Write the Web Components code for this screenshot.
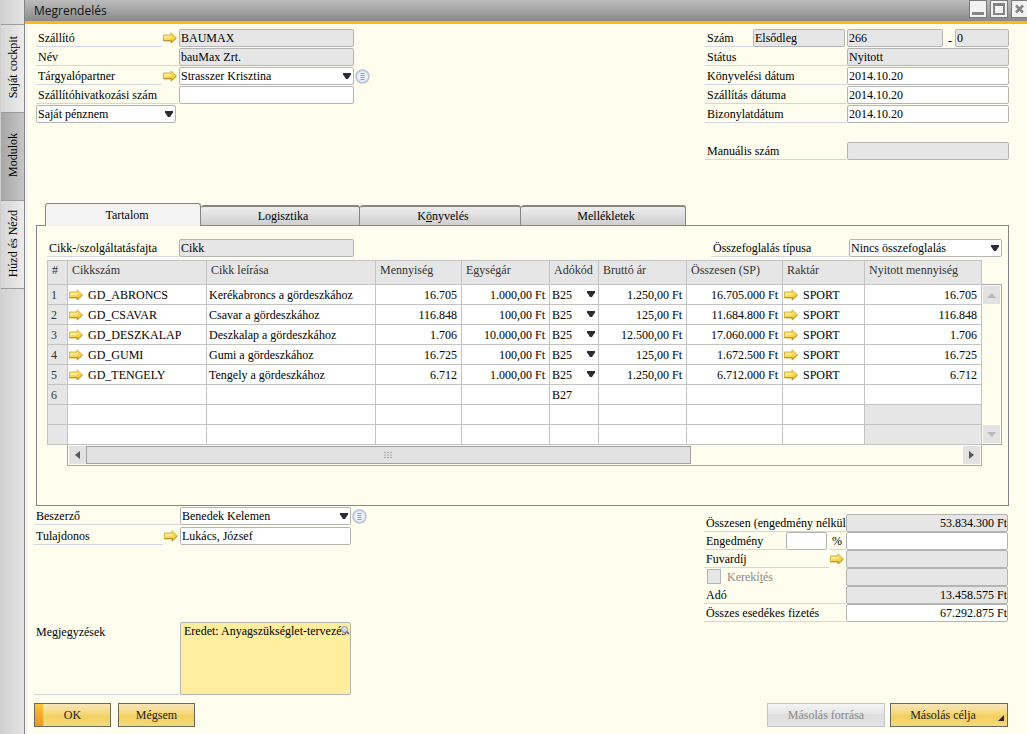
<!DOCTYPE html>
<html lang="hu">
<head>
<meta charset="utf-8">
<title>Megrendelés</title>
<style>
  html, body { margin: 0; background: #fffdee; }
  body { font: 12px/16px "Liberation Serif", "Times New Roman", serif; color: #000; }
</style>
</head>
<body>
<order-app></order-app>

<script>
const define = (name, html, setup) => {
  const tpl = document.createElement('template');
  tpl.innerHTML = html;
  customElements.define(name, class extends HTMLElement {
    constructor() {
      super();
      this.attachShadow({ mode: 'open' }).append(tpl.content.cloneNode(true));
    }
    connectedCallback() {
      if (!setup || this.ready) return;
      this.ready = true;
      setup(this, this.shadowRoot);
    }
  });
};

const BASE = `*, *::before, *::after { box-sizing: border-box; }
  button, input, select, textarea { font: inherit; color: inherit; margin: 0; }`;
const TRIANGLE = '<svg width="10" height="6" viewBox="0 0 10 6" aria-hidden="true"><path d="M1 0h8v1.500L6 6H4L1 1.500z" fill="#2c2c36"/></svg>';

/* Yellow drill-down arrow */
define('link-arrow', `
<style>
  :host { display: block; width: 14px; height: 12px; flex: none; }
  svg { display: block; }
</style>
<svg width="14" height="12" viewBox="0 0 14 12" aria-hidden="true">
  <defs><linearGradient id="g" x1="0" y1="0" x2="1" y2="1">
    <stop offset="0" stop-color="#fdeb8c"/><stop offset=".6" stop-color="#f6d548"/><stop offset="1" stop-color="#e0b02c"/></linearGradient></defs>
  <path d="M.5 3h7.500V.8L13.500 6 8 11.200V9H.5z" fill="url(#g)" stroke="#d4b548"/>
  <path d="M.5 8.500h8v2L13 6.400" fill="none" stroke="#b8962e"/>
  <path d="M1.500 5h7" stroke="#fff7bd"/>
</svg>`);

/* Round list button beside a combo box */
define('list-button', `
<style>${BASE}
  :host { display: block; flex: none; width: 15px; height: 15px; }
  button { display: block; width: 15px; height: 15px; padding: 0; border: 0; background: none; }
  svg { display: block; }
</style>
<button aria-label="Lista"><svg width="15" height="15" viewBox="0 0 15 15">
  <circle cx="7.500" cy="7.500" r="6.500" fill="#dfe7f5" stroke="#b9c3d6" stroke-width="1.500"/>
  <circle cx="7.500" cy="7.500" r="4.500" fill="#eef3fc"/>
  <path d="M5.500 4.500h4M5.500 6.500h4M5.500 8.500h4M5.500 10.500h4" stroke="#8f98ab"/>
</svg></button>`);

/* Drop-down with a black triangle */
define('combo-box', `
<style>${BASE}
  :host { display: block; position: relative; height: 18px; min-width: 0; }
  select { appearance: none; display: block; width: 100%; height: 100%; padding: 0 14px 0 1px;
    border: 1px solid #b4b4b4; border-radius: 2px; background: #fff; line-height: 16px; }
  svg { position: absolute; right: 2px; top: 50%; margin-top: -3px; pointer-events: none; }
  :host([plain]) { height: 19px; }
  :host([plain]) select { border: 0; background: none; padding-left: 2px; }
  :host([plain]) svg { margin-top: -4px; }
</style>
<select></select>${TRIANGLE}`,
(el, root) => {
  const s = root.querySelector('select');
  s.add(new Option(el.getAttribute('value')));
  s.setAttribute('aria-label', el.getAttribute('label') || '');
});

/* Underlined label followed by a text box or drop-down */
define('form-field', `
<style>${BASE}
  :host { display: flex; height: 18px; min-width: 0; }
  .head { display: flex; flex: none; width: var(--label, 0px); }
  label { flex: 1; min-width: 0; overflow: hidden; white-space: nowrap; padding-left: 2px;
    line-height: 18px; border-bottom: 1px solid #d2d6de; }
  .head link-arrow { margin: 3px 2px 0 1px; }
  .box { position: relative; flex: 1; min-width: 0; }
  input, select { appearance: none; display: block; width: 100%; height: 18px; padding: 0 1px;
    border: 1px solid #b4b4b4; border-radius: 2px; background: #fff; line-height: 16px; outline: 0; }
  input:read-only { background: #e6e6e6; }
  :host([number]) input { text-align: right; padding: 0; }
  svg { position: absolute; right: 2px; top: 6px; pointer-events: none; }
</style>
<div class="head"><label for="f"><slot></slot></label></div><div class="box"></div>`,
(el, root) => {
  const value = el.getAttribute('value') || '';
  const combo = el.hasAttribute('combo');
  const c = document.createElement(combo ? 'select' : 'input');
  c.id = 'f';
  if (combo) c.add(new Option(value));
  else { c.value = value; c.readOnly = el.hasAttribute('locked'); }
  const box = root.querySelector('.box');
  box.append(c);
  if (combo) box.insertAdjacentHTML('beforeend', TRIANGLE);
  if (el.hasAttribute('arrow')) root.querySelector('.head').append(document.createElement('link-arrow'));
  if (el.hasAttribute('bare')) {
    root.querySelector('.head').remove();
    c.setAttribute('aria-label', el.getAttribute('bare'));
  }
});

define('check-field', `
<style>${BASE}
  :host { display: flex; height: 18px; color: #8a8a8a; }
  input { appearance: none; width: 14px; height: 15px; margin: 1px 6px 0 3px; border: 1px solid #b4b4b4; background: #e6e6e6; }
  label { line-height: 18px; }
</style>
<input type="checkbox" id="c" disabled><label for="c"><slot></slot></label>`);

define('note-field', `
<style>${BASE}
  :host { display: flex; height: 73px; }
  label { flex: none; width: var(--label); padding: 2px 0 0 2px; border-bottom: 1px solid #d2d6de; }
  .box { position: relative; flex: 1; min-width: 0; }
  textarea { display: block; width: 100%; height: 100%; resize: none; overflow: hidden; padding: 0 0 0 3px;
    white-space: pre; border: 1px solid #b4b4b4; border-radius: 2px; background: #ffee9e; outline: 0; }
  svg { position: absolute; right: 1px; top: 3px; }
</style>
<label for="n"><slot></slot></label>
<div class="box"><textarea id="n"></textarea>
<svg width="10" height="10" viewBox="0 0 10 10" aria-hidden="true">
  <path d="M6 6l3 3" stroke="#66707f" stroke-width="2"/>
  <circle cx="4.500" cy="4.500" r="3" fill="#d5e4f4" fill-opacity=".85" stroke="#8791a5"/></svg></div>`,
(el, root) => { root.querySelector('textarea').value = el.getAttribute('value'); });

define('action-button', `
<style>${BASE}
  :host { display: block; width: var(--w, 77px); }
  button { position: relative; display: block; width: 100%; height: 24px; padding: 0; color: #222;
    border: 1px solid #6b6759; background: linear-gradient(#f8e6bb, #f4d778 45%, #f2d05f 55%, #f3d97c); }
  :host([primary]) button::before { content: ""; position: absolute; inset: 0 auto 0 0; width: 8px;
    background: linear-gradient(#fac83c, #f2a92b 50%, #ee9621); }
  :host([menu]) button { padding-right: 12px; }
  :host([menu]) button::after { content: ""; position: absolute; right: 3px; bottom: 5px;
    border: 3px solid; border-color: transparent #262630 #262630 transparent; }
  button:disabled { color: #8a8a8a; border-color: #c4c4c4; background: linear-gradient(#f4f4f4, #e6e6e6 45%, #dcdcdc 46%, #e4e4e4); }
</style>
<button><slot></slot></button>`,
(el, root) => { root.querySelector('button').disabled = el.hasAttribute('disabled'); });

define('side-rail', `
<style>${BASE}
  :host { display: flex; flex-direction: column; width: 25px; padding-left: 1px; background: linear-gradient(90deg, #cfcfcf, #e3e3e3);
    border-right: 1px solid #858585; }
  .top { height: 25px; border-bottom: 1px solid #9a9a9a; }
  button { display: flex; align-items: center; justify-content: center; width: 100%; padding: 0 0 2px; border: 0;
    border-bottom: 1px solid #9a9a9a; background: linear-gradient(90deg, #d6d6d6, #ececec); height: 88px; }
  button.on { background: linear-gradient(90deg, #a6a6a6, #c6c6c6); }
  span { writing-mode: vertical-rl; transform: rotate(180deg); white-space: nowrap; }
</style>
<div class="top"></div>
<button><span>Saját cockpit</span></button>
<button class="on"><span>Modulok</span></button>
<button><span>Húzd és Nézd</span></button>`);

define('title-bar', `
<style>${BASE}
  :host { display: flex; justify-content: space-between; height: 24px; overflow: hidden;
    border-bottom: 3px solid #fcb814; background: linear-gradient(#bcbcbc, #8a8a8a); }
  h1 { margin: 0; padding-left: 9px; font: 12px/22px "Open Sans", "Noto Sans", sans-serif; color: #111; }
  .tools { display: flex; gap: 3px; margin-right: -2px; }
  button { width: 18px; height: 18px; padding: 0; border: 1px solid #7a7a7a; background: #f2f2f2; }
  svg { display: block; }
</style>
<h1><slot></slot></h1>
<div class="tools">
  <button aria-label="Kis méret"><svg width="16" height="16"><path d="M2 12.500h12" stroke="#858585" stroke-width="3"/></svg></button>
  <button aria-label="Teljes méret"><svg width="16" height="16"><path d="M3 4h10v9H3zM2 3h12" fill="none" stroke="#858585" stroke-width="2"/></svg></button>
  <button aria-label="Bezárás"><svg width="16" height="16"><path d="M4 4.500l7 7m0-7l-7 7" stroke="#858585" stroke-width="2.500"/></svg></button>
</div>`);

define('tab-strip', `
<style>${BASE}
  :host { display: flex; align-items: flex-end; margin: 0 0 -1px 9px; position: relative; }
  button { height: 21px; padding: 0 0 0 6px; border: solid #868686; border-width: 2px 1px 1px 0; border-radius: 3px 3px 0 0;
    background: linear-gradient(#ececec, #cfcfcf); }
  button.on { height: 23px; border-width: 1px 1px 0 1px; background: #f3f3f3; padding-left: 8px; }
</style>
<div role="tablist" style="display:contents">
  <button role="tab" class="on" style="width:156px">Tartalom</button>
  <button role="tab" style="width:159px">Logisztika</button>
  <button role="tab" style="width:161px">K<u>ö</u>nyvelés</button>
  <button role="tab" style="width:165px">Mellékletek</button>
</div>`);

define('scroll-bar', `
<style>${BASE}
  :host { display: flex; border: 1px solid #a8a8a8; padding: 1px; background: #fffdee; }
  :host([vertical]) { flex-direction: column; justify-content: space-between; border-left: 0; }
  :host(:not([vertical])) { border-top: 0; }
  button { display: grid; place-items: center; width: 17px; height: 18px; padding: 0; border: 0; background: #e2e2e2; flex: none; }
  .track { flex: 1; }
  :host([vertical]) .track { display: none; }
  .thumb { width: 69%; height: 18px; border: 1px solid #a0a0a0; background: #e2e2e2; display: grid; place-items: center; }
  :host([vertical]) .h, :host(:not([vertical])) .v { display: none; }
</style>
<button class="h" aria-label="Balra"><svg width="5" height="8"><path d="M5 0v8L0 4z" fill="#555"/></svg></button>
<button class="v" aria-label="Fel"><svg width="9" height="5"><path d="M0 5h9L5 0z" fill="#b8b8b8"/></svg></button>
<div class="track"><div class="thumb"><svg width="9" height="6"><path d="M0 .500h9M0 3h9M0 5.500h9" stroke="#aaa" stroke-dasharray="2 1"/></svg></div></div>
<button class="h" aria-label="Jobbra"><svg width="5" height="8"><path d="M0 0v8l5-4z" fill="#555"/></svg></button>
<button class="v" aria-label="Le"><svg width="9" height="5"><path d="M0 0h9L5 5z" fill="#b8b8b8"/></svg></button>`);

const ITEMS = [
  ['GD_ABRONCS', 'Kerékabroncs a gördeszkához', '16.705', '1.000,00 Ft', '1.250,00 Ft', '16.705.000 Ft'],
  ['GD_CSAVAR', 'Csavar a gördeszkához', '116.848', '100,00 Ft', '125,00 Ft', '11.684.800 Ft'],
  ['GD_DESZKALAP', 'Deszkalap a gördeszkához', '1.706', '10.000,00 Ft', '12.500,00 Ft', '17.060.000 Ft'],
  ['GD_GUMI', 'Gumi a gördeszkához', '16.725', '100,00 Ft', '125,00 Ft', '1.672.500 Ft'],
  ['GD_TENGELY', 'Tengely a gördeszkához', '6.712', '1.000,00 Ft', '1.250,00 Ft', '6.712.000 Ft']
];

define('item-table', `
<style>${BASE}
  :host { display: grid; grid-template-columns: 20px minmax(0, 1fr) 20px; }
  table { grid-column: 1 / 3; width: 100%; table-layout: fixed; border-collapse: separate; border-spacing: 0;
    border: solid #c3c3c3; border-width: 1px 0 0 1px; background: #fff; }
  th, td { padding: 0; border: solid #c3c3c3; border-width: 0 1px 1px 0; white-space: nowrap; overflow: hidden; text-align: left; font-weight: normal; }
  th { background: #e6e6e6; color: #333; }
  thead th { height: 24px; padding: 0 0 6px 4px; }
  tbody th { padding-left: 3px; }
  td, tbody th { height: 20px; }
  td { padding-left: 2px; }
  .num { text-align: right; padding-right: 4px; }
  .off { background: #e6e6e6; }
  td.go { padding-left: 1px; }
  .link { display: flex; align-items: center; gap: 5px; }
  td.code combo-box { margin-left: -2px; }
  .vs { margin-top: 24px; }
  .hs { grid-column: 2; }
</style>
<table>
  <colgroup><col style="width:20px"><col style="width:139px"><col><col style="width:86px"><col style="width:88px"><col style="width:49px"><col style="width:88px"><col style="width:96px"><col style="width:82px"><col style="width:117px"></colgroup>
  <thead><tr><th>#</th><th>Cikkszám</th><th>Cikk leírása</th><th>Mennyiség</th><th>Egységár</th><th>Adókód</th><th>Bruttó ár</th><th>Összesen (SP)</th><th>Raktár</th><th>Nyitott mennyiség</th></tr></thead>
  <tbody></tbody>
</table>
<scroll-bar vertical class="vs"></scroll-bar>
<scroll-bar class="hs"></scroll-bar>`,
(el, root) => {
  const rows = ITEMS.map(([code, name, qty, price, gross, total], i) => `<tr><th>${i + 1}</th>
    <td class="go"><div class="link"><link-arrow></link-arrow>${code}</div></td><td>${name}</td>
    <td class="num">${qty}</td><td class="num">${price}</td>
    <td class="code"><combo-box plain label="Adókód" value="B25"></combo-box></td>
    <td class="num">${gross}</td><td class="num">${total}</td>
    <td class="go"><div class="link"><link-arrow></link-arrow>SPORT</div></td><td class="num">${qty}</td></tr>`);
  const blank = (n, code, off) => `<tr><th>${n}</th><td></td><td></td><td></td><td></td><td class="code">${code}</td><td></td><td></td><td></td><td class="${off}"></td></tr>`;
  rows.push(blank('6', 'B27', ''), blank('', '', 'off'), blank('', '', 'off'));
  root.querySelector('tbody').innerHTML = rows.join('');
});

define('order-app', `
<style>${BASE}
  :host { display: grid; grid-template-columns: 25px minmax(0, 1fr); min-height: 100vh; }
  .window { display: flex; flex-direction: column; min-width: 0; }
  main { flex: 1; display: flex; flex-direction: column; padding: 5px 18px 7px 8px; border-left: 3px solid #f4f4f4; }
  .row { display: flex; }
  .between { display: flex; justify-content: space-between; align-items: flex-start; }
  .stack { display: grid; gap: 1px; }
  .left { --label: 143px; width: 318px; }
  .right { --label: 142px; width: 304px; }
  .grow { flex: 1; }
  .head { min-height: 174px; }
  .left list-button { margin: 2px -16px 0 1px; }
  .currency { width: 140px; }
  .manual { margin-top: 18px; }
  .dash { width: 12px; height: 18px; padding-left: 2px; text-align: center; line-height: 24px; }
  .panel { min-height: 281px; padding: 13px 6px 0 10px; border: 1px solid #868686; }
  .type { --label: 132px; width: 307px; }
  .summary { --label: 138px; width: 291px; }
  item-table { margin-top: 3px; }
  .foot { flex: 1; margin: 1px 1px 8px -2px; }
  .foot .left { --label: 146px; width: 317px; gap: 2px; }
  .foot .right { margin-top: 7px; gap: 0; }
  note-field { margin-top: 75px; }
  .pct { width: 16px; height: 18px; margin-left: 3px; padding-left: 2px; line-height: 18px; border-bottom: 1px solid #d2d6de; }
  .actions { display: flex; gap: 7px; margin: 0 1px 0 -2px; }
  .actions .push { margin-left: auto; margin-right: -2px; }
</style>
<side-rail></side-rail>
<div class="window">
  <title-bar>Megrendelés</title-bar>
  <main>
    <div class="between head">
      <div class="stack left">
        <form-field locked arrow value="BAUMAX">Szállító</form-field>
        <form-field locked value="bauMax Zrt.">Név</form-field>
        <div class="row"><form-field class="grow" combo arrow value="Strasszer Krisztina">Tárgyalópartner</form-field><list-button></list-button></div>
        <form-field>Szállítóhivatkozási szám</form-field>
        <combo-box class="currency" label="Pénznem" value="Saját pénznem"></combo-box>
      </div>
      <div class="stack right">
        <div class="row">
          <form-field locked value="Elsődleg" style="--label:48px; width:140px; margin-right:2px">Szám</form-field>
          <form-field class="grow" locked bare="Bizonylatszám" value="266"></form-field>
          <span class="dash">-</span>
          <form-field locked bare="Részszám" value="0" style="width:54px"></form-field>
        </div>
        <form-field locked value="Nyitott">Státus</form-field>
        <form-field value="2014.10.20">Könyvelési dátum</form-field>
        <form-field value="2014.10.20">Szállítás dátuma</form-field>
        <form-field value="2014.10.20">Bizonylatdátum</form-field>
        <form-field class="manual" locked>Manuális szám</form-field>
      </div>
    </div>
    <tab-strip></tab-strip>
    <section class="panel">
      <div class="between">
        <form-field class="type" locked value="Cikk">Cikk-/szolgáltatásfajta</form-field>
        <form-field class="summary" combo value="Nincs összefoglalás">Összefoglalás típusa</form-field>
      </div>
      <item-table></item-table>
    </section>
    <div class="between foot">
      <div class="stack left">
        <div class="row"><form-field class="grow" combo value="Benedek Kelemen">Beszerző</form-field><list-button></list-button></div>
        <form-field arrow value="Lukács, József">Tulajdonos</form-field>
        <note-field value="Eredet: Anyagszükséglet-tervezés">Megjegyzések</note-field>
      </div>
      <div class="stack right">
        <form-field number locked value="53.834.300 Ft">Összesen (engedmény nélkül)</form-field>
        <div class="row">
          <form-field style="--label:82px; width:123px">Engedmény</form-field>
          <span class="pct">%</span>
          <form-field class="grow" bare="Engedmény összege"></form-field>
        </div>
        <form-field locked arrow>Fuvardíj</form-field>
        <div class="row">
          <check-field style="width:142px">Kerekí<u>t</u>és</check-field>
          <form-field class="grow" locked bare="Kerekítés összege"></form-field>
        </div>
        <form-field number locked value="13.458.575 Ft">Adó</form-field>
        <form-field number value="67.292.875 Ft">Összes esedékes fizetés</form-field>
      </div>
    </div>
    <div class="actions">
      <action-button primary>OK</action-button>
      <action-button>Mégsem</action-button>
      <action-button class="push" disabled style="--w:118px">Másolás forrása</action-button>
      <action-button menu style="--w:118px">Másolás célja</action-button>
    </div>
  </main>
</div>`);
</script>
</body>
</html>
